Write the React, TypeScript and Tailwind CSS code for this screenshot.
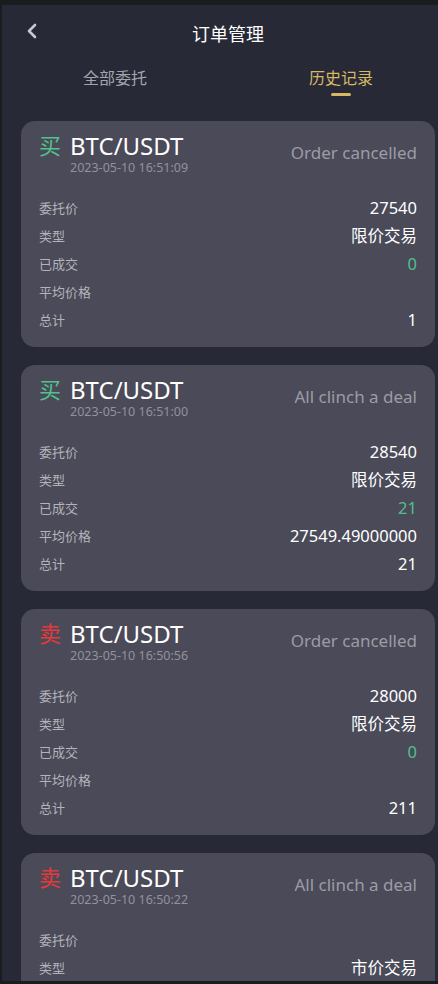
import React from "react";

type Row = { label: string; value: string; green?: boolean };
type Order = { side: "buy" | "sell"; time: string; status: string; rows: Row[] };

const orders: Order[] = [
  {
    side: "buy",
    time: "2023-05-10 16:51:09",
    status: "Order cancelled",
    rows: [
      { label: "委托价", value: "27540" },
      { label: "类型", value: "限价交易" },
      { label: "已成交", value: "0", green: true },
      { label: "平均价格", value: "" },
      { label: "总计", value: "1" },
    ],
  },
  {
    side: "buy",
    time: "2023-05-10 16:51:00",
    status: "All clinch a deal",
    rows: [
      { label: "委托价", value: "28540" },
      { label: "类型", value: "限价交易" },
      { label: "已成交", value: "21", green: true },
      { label: "平均价格", value: "27549.49000000" },
      { label: "总计", value: "21" },
    ],
  },
  {
    side: "sell",
    time: "2023-05-10 16:50:56",
    status: "Order cancelled",
    rows: [
      { label: "委托价", value: "28000" },
      { label: "类型", value: "限价交易" },
      { label: "已成交", value: "0", green: true },
      { label: "平均价格", value: "" },
      { label: "总计", value: "211" },
    ],
  },
  {
    side: "sell",
    time: "2023-05-10 16:50:22",
    status: "All clinch a deal",
    rows: [
      { label: "委托价", value: "" },
      { label: "类型", value: "市价交易" },
    ],
  },
];

const OrderCard: React.FC<{ order: Order }> = ({ order }) => (
  <div className="rounded-[14px] bg-[#4a4a58] pl-[18px] pr-[18px] pt-[10px] pb-[13px]">
    <div className="flex items-center justify-between">
      <div>
        <div className="flex h-[29px] items-center">
          <span
            className={
              order.side === "buy"
                ? "text-[22px] leading-[29px] text-[#52c18b]"
                : "text-[22px] leading-[29px] text-[#e5393b]"
            }
          >
            {order.side === "buy" ? "买" : "卖"}
          </span>
          <span className="ml-[9px] text-[24px] leading-[29px] text-white">BTC/USDT</span>
        </div>
        <div className="h-[15px] pl-[31px] text-[12.5px] leading-[15px] text-[#92929c]">{order.time}</div>
      </div>
      <div className="text-[17px] leading-[24px] text-[#9c9ca6]">{order.status}</div>
    </div>
    <div className="mt-[19px]">
      {order.rows.map((r) => (
        <div key={r.label} className="flex h-[28px] items-center justify-between">
          <span className="text-[13px] leading-[20px] text-[#b3b3bb]">{r.label}</span>
          <span
            className={
              r.green
                ? "text-[16.5px] leading-[22px] text-[#4fc08c]"
                : "text-[16.5px] leading-[22px] text-white"
            }
          >
            {r.value}
          </span>
        </div>
      ))}
    </div>
  </div>
);

export default function App() {
  return (
    <div
      className="h-[984px] w-[438px] overflow-hidden bg-[#1b1c20] pt-[5px] pl-[2px] pb-[3px]"
      style={{ fontFamily: '"Noto Sans", "Noto Sans CJK SC", sans-serif' }}
    >
      <div className="h-full w-[452px] overflow-hidden bg-[#272a36]">
        <div className="relative flex h-[58px] items-center justify-center">
          <svg
            className="absolute left-[23px] top-[17px]"
            width="14"
            height="18"
            viewBox="0 0 14 18"
            fill="none"
            stroke="#c8c9d0"
            strokeWidth="2.6"
            strokeLinecap="round"
            strokeLinejoin="round"
          >
            <path d="M10 3 L4 9 L10 15" />
          </svg>
          <span className="text-[18px] text-white">订单管理</span>
        </div>
        <div className="flex h-[40px] pt-[4px]">
          <div className="flex flex-1 flex-col items-center">
            <span className="text-[16px] leading-[22px] text-[#a3a5ae]">全部委托</span>
          </div>
          <div className="flex flex-1 flex-col items-center">
            <span className="text-[16px] leading-[22px] text-[#d7b865]">历史记录</span>
            <div className="mt-[4px] h-[3px] w-[20px] rounded-full bg-[#d7b865]" />
          </div>
        </div>
        <div className="flex flex-col gap-[18px] px-[19px] pt-[18px]">
          {orders.map((o, i) => (
            <OrderCard key={i} order={o} />
          ))}
        </div>
      </div>
    </div>
  );
}
